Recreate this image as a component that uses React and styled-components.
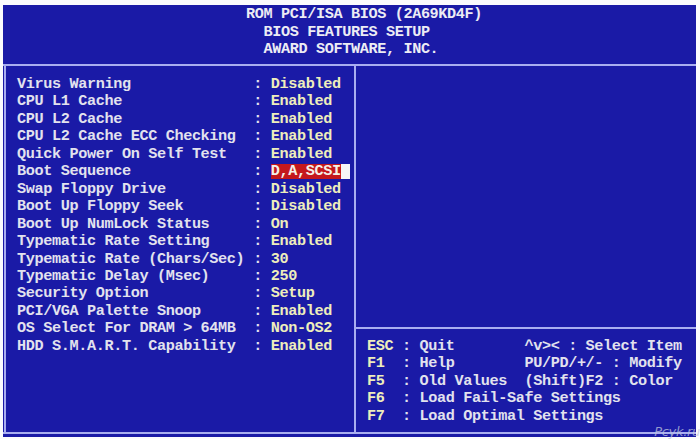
import React from "react";
import styled, { createGlobalStyle } from "styled-components";

const Global = createGlobalStyle`
  html, body { margin: 0; padding: 0; background: #fbfbfd; }
  body { width: 700px; height: 439px; overflow: hidden; }
`;

const BLUE = "#1a1aa6";
const RULE = "#a9aef0";
const LABEL = "#e2e2ee";
const VALUE = "#eeeebc";
const RED = "#c4181c";
const CH = 8.75;

const Screen = styled.div`
  position: relative;
  margin: 5px 4px 0 3px;
  height: 432px;
  box-sizing: border-box;
  padding-bottom: 3px;
  background: ${BLUE};
  display: flex;
  flex-direction: column;
  font-family: "Liberation Mono", "DejaVu Sans Mono", monospace;
  font-weight: bold;
  font-size: 15.2px;
  letter-spacing: ${CH - 15.2 * 0.6}px;
  line-height: 17.45px;
  color: ${LABEL};
`;

const Header = styled.div`
  height: 59px;
  box-sizing: border-box;
  padding: 1px 0 0 243px;
  display: flex;
  flex-direction: column;
  white-space: pre;
  color: #ececf4;
  line-height: 17.5px;
`;

const HRule = styled.div`
  height: 2px;
  background: ${RULE};
  flex: none;
`;

const Body = styled.div`
  flex: 1;
  display: flex;
  border-bottom: 2px solid ${RULE};
  min-height: 0;
`;

const LeftPanel = styled.div`
  width: 337px;
  margin-left: 1px;
  border-left: 2px solid ${RULE};
  border-right: 2px solid ${RULE};
  padding: 10px 0 0 11px;
  box-sizing: content-box;
  display: flex;
  flex-direction: column;
`;

const Row = styled.div`
  display: grid;
  grid-template-columns: ${27 * CH}px ${2 * CH}px auto;
  white-space: pre;
`;

const Label = styled.span`
  color: ${LABEL};
`;

const Colon = styled.span`
  color: ${LABEL};
`;

const Value = styled.span`
  color: ${VALUE};
  justify-self: start;
  display: flex;
  align-items: center;
`;

const Selected = styled.span`
  color: #f4f0e8;
  background: linear-gradient(
    transparent 1px,
    ${RED} 1px,
    ${RED} 16px,
    transparent 16px
  );
`;

const Cursor = styled.span`
  display: inline-block;
  width: 9px;
  height: 15px;
  background: #f6f6f6;
`;

const RightPanel = styled.div`
  flex: 1;
  display: flex;
  flex-direction: column;
`;

const RightTop = styled.div`
  flex: 1;
  border-bottom: 2px solid ${RULE};
`;

const Help = styled.div`
  height: 103px;
  box-sizing: border-box;
  padding: 9px 0 0 11px;
  display: flex;
  flex-direction: column;
  white-space: pre;
`;

const HelpLine = styled.div`
  display: flex;
`;

const Key = styled.span`
  color: ${VALUE};
  width: ${4 * CH}px;
`;

const Text = styled.span`
  color: ${LABEL};
`;

const Watermark = styled.div`
  position: absolute;
  right: -4px;
  bottom: -3px;
  font-family: "DejaVu Sans", sans-serif;
  font-style: italic;
  font-weight: normal;
  font-size: 13px;
  color: rgba(190, 196, 220, 0.75);
  letter-spacing: -0.3px;
`;

const settings = [
  ["Virus Warning", "Disabled"],
  ["CPU L1 Cache", "Enabled"],
  ["CPU L2 Cache", "Enabled"],
  ["CPU L2 Cache ECC Checking", "Enabled"],
  ["Quick Power On Self Test", "Enabled"],
  ["Boot Sequence", "D,A,SCSI", true],
  ["Swap Floppy Drive", "Disabled"],
  ["Boot Up Floppy Seek", "Disabled"],
  ["Boot Up NumLock Status", "On"],
  ["Typematic Rate Setting", "Enabled"],
  ["Typematic Rate (Chars/Sec)", "30"],
  ["Typematic Delay (Msec)", "250"],
  ["Security Option", "Setup"],
  ["PCI/VGA Palette Snoop", "Enabled"],
  ["OS Select For DRAM > 64MB", "Non-OS2"],
  ["HDD S.M.A.R.T. Capability", "Enabled"],
];

const help = [
  ["ESC", ": Quit        ^v>< : Select Item"],
  ["F1", ": Help        PU/PD/+/- : Modify"],
  ["F5", ": Old Values  (Shift)F2 : Color"],
  ["F6", ": Load Fail-Safe Settings"],
  ["F7", ": Load Optimal Settings"],
];

export default function App() {
  return (
    <>
      <Global />
      <Screen>
        <Header>
          <div>ROM PCI/ISA BIOS (2A69KD4F)</div>
          <div>{"  BIOS FEATURES SETUP"}</div>
          <div>{"  AWARD SOFTWARE, INC."}</div>
        </Header>
        <HRule />
        <Body>
          <LeftPanel>
            {settings.map(([l, v, sel]) => (
              <Row key={l}>
                <Label>{l}</Label>
                <Colon>:</Colon>
                <Value>
                  {sel ? (
                    <>
                      <Selected>{v}</Selected>
                      <Cursor />
                    </>
                  ) : (
                    v
                  )}
                </Value>
              </Row>
            ))}
          </LeftPanel>
          <RightPanel>
            <RightTop />
            <Help>
              {help.map(([k, t]) => (
                <HelpLine key={k}>
                  <Key>{k}</Key>
                  <Text>{t}</Text>
                </HelpLine>
              ))}
            </Help>
          </RightPanel>
        </Body>
        <Watermark>Pcyk.ru</Watermark>
      </Screen>
    </>
  );
}
